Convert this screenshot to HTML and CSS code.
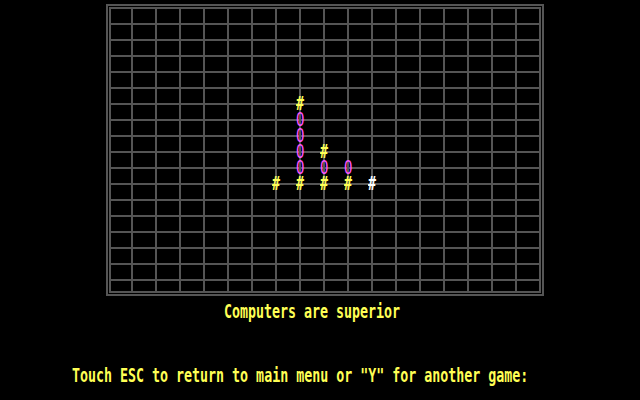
FILE: index.html
```html
<!DOCTYPE html>
<html>
<head>
<meta charset="utf-8">
<title>Go-Moku</title>
<link rel="stylesheet" href="styles.css">
</head>
<body>
<div class="screen">
  <div class="board">
    <div class="grid"></div>
    <span class="piece cross" style="left:188px;top:90px"><span class="g">#</span></span>
    <span class="piece ring" style="left:188px;top:106px"><span class="g">O</span></span>
    <span class="piece ring" style="left:188px;top:122px"><span class="g">O</span></span>
    <span class="piece ring" style="left:188px;top:138px"><span class="g">O</span></span>
    <span class="piece ring" style="left:188px;top:154px"><span class="g">O</span></span>
    <span class="piece cross" style="left:188px;top:170px"><span class="g">#</span></span>
    <span class="piece cross" style="left:164px;top:170px"><span class="g">#</span></span>
    <span class="piece cross" style="left:212px;top:138px"><span class="g">#</span></span>
    <span class="piece ring" style="left:212px;top:154px"><span class="g">O</span></span>
    <span class="piece cross" style="left:212px;top:170px"><span class="g">#</span></span>
    <span class="piece ring" style="left:236px;top:154px"><span class="g">O</span></span>
    <span class="piece cross" style="left:236px;top:170px"><span class="g">#</span></span>
    <span class="piece cross last" style="left:260px;top:170px"><span class="g">#</span></span>
  </div>
  <p class="msg msg-result"><span class="g">Computers are superior</span></p>
  <p class="msg msg-prompt"><span class="g">Touch ESC to return to main menu or "Y" for another game:</span></p>
</div>
</body>
</html>
```
FILE: styles.css
```css
html, body {
  margin: 0;
  padding: 0;
  background: #000;
}

.screen {
  width: 640px;
  height: 400px;
  overflow: hidden;
  padding-top: 4px;
  box-sizing: border-box;
}

.board {
  position: relative;
  width: 432px;
  height: 286px;
  margin: 0 0 0 106px;
  border: 2px solid #555555;
  padding: 1px;
}

.grid {
  width: 428px;
  height: 282px;
  border: 2px solid #555555;
  background-color: #000;
  background-image:
    linear-gradient(to right, #555555 0 2px, transparent 2px),
    linear-gradient(to bottom, #555555 0 2px, transparent 2px);
  background-size: 24px 100%, 100% 16px;
  background-repeat: repeat-x, repeat-y;
  background-position: 20px 0, 0 14px;
}

.piece {
  position: absolute;
  width: 8px;
  height: 16px;
  white-space: pre;
  color: #ffff55;
  font: bold 13.3px/11px "DejaVu Sans Mono", monospace;
}

.piece .g {
  transform: scaleY(1.44);
}

.piece.last {
  color: #ffffff;
}

.piece.ring {
  color: #ff55ff;
  font-weight: normal;
}

.piece.ring .g {
  transform: scaleX(1.05) scaleY(1.44);
}

.g {
  display: inline-block;
  transform-origin: 0 0;
}

.msg {
  margin: 0;
  height: 16px;
  color: #ffff55;
  font: bold 13.3px/11px "DejaVu Sans Mono", monospace;
  white-space: pre;
}

.msg .g {
  transform: scaleY(1.44);
}

.msg-result {
  margin-top: 8px;
  padding-left: 224px;
}

.msg-prompt {
  margin-top: 48px;
  padding-left: 72px;
}
```
